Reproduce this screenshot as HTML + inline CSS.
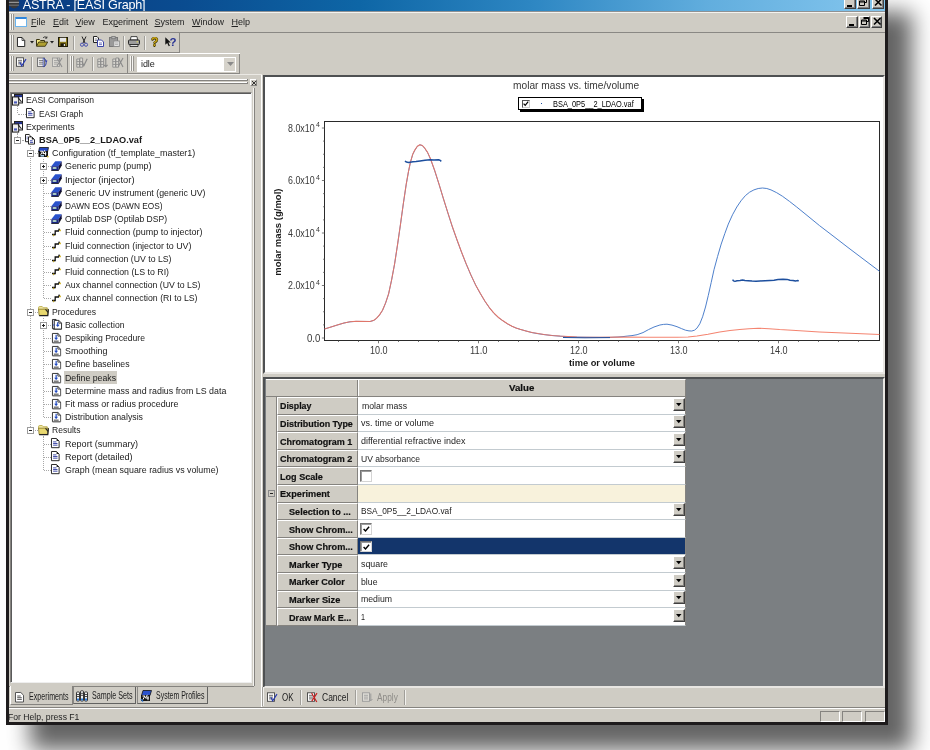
<!DOCTYPE html>
<html><head><meta charset="utf-8"><title>ASTRA</title>
<style>
html,body{margin:0;padding:0;background:#fff;}
body{width:930px;height:750px;overflow:hidden;position:relative;font-family:"Liberation Sans",sans-serif;font-size:9px;color:#000;}
div{position:absolute;box-sizing:border-box;}
svg{position:absolute;overflow:visible;}
.t{height:16px;line-height:16px;white-space:pre;}
u{text-decoration:underline;}
</style></head>
<body>
<div id="root" style="left:0;top:0;width:930px;height:750px;will-change:transform;">
<div style="left:6px;top:-13px;width:882px;height:737.8px;background:#cfccc4;border:3px solid #1e1b1c;box-shadow:24px 25px 21px rgba(0,0,2,0.61);"></div>
<div style="left:9px;top:0px;width:876px;height:11.2px;background:linear-gradient(90deg,#0a3a80 0%,#0a4c90 20%,#0e66a6 40%,#2e87c3 60%,#62aede 80%,#84c6ee 100%);"></div>
<div class="t" style="left:22.7px;top:-3px;font-size:12.6px;color:#fff;letter-spacing:-0.2px;">ASTRA - [EASI Graph]</div>
<svg style="left:8.3px;top:-3.6px" width="12" height="13.5" viewBox="0 0 13 14" preserveAspectRatio="none"><ellipse cx="6.5" cy="7" rx="5.5" ry="6" fill="#3a3a3c"/><rect x="1" y="6" width="11" height="1.2" fill="#9a9a9a"/><rect x="1" y="9" width="11" height="1" fill="#777"/></svg>
<div style="left:844.3px;top:-2.6px;width:12px;height:11.6px;background:#cfccc4;border:1px solid;border-color:#fff #404040 #404040 #fff;box-shadow:inset -1px -1px 0 #808080;"></div>
<div style="left:847.3px;top:5.0px;width:5px;height:2px;background:#000;"></div>
<div style="left:857.3px;top:-2.6px;width:12.3px;height:11.6px;background:#cfccc4;border:1px solid;border-color:#fff #404040 #404040 #fff;box-shadow:inset -1px -1px 0 #808080;"></div>
<svg style="left:859.3px;top:-1.6px" width="9" height="9" viewBox="0 0 9 9"><path d="M2.5 0.5h5v4h-1.5M2.5 1.5h5M0.5 3h5v4.5h-5zM0.5 4h5" stroke="#000" stroke-width="1" fill="none"/></svg>
<div style="left:872px;top:-2.6px;width:12.3px;height:11.6px;background:#cfccc4;border:1px solid;border-color:#fff #404040 #404040 #fff;box-shadow:inset -1px -1px 0 #808080;"></div>
<svg style="left:874px;top:-1.6px" width="9" height="9" viewBox="0 0 9 9"><path d="M1 1l6.5 6.5M7.5 1l-6.5 6.5" stroke="#000" stroke-width="1.6" fill="none"/></svg>
<div style="left:846.3px;top:16.2px;width:11.6px;height:12.2px;background:#cfccc4;border:1px solid;border-color:#fff #404040 #404040 #fff;box-shadow:inset -1px -1px 0 #808080;"></div>
<div style="left:849.3px;top:24.4px;width:5px;height:2px;background:#000;"></div>
<div style="left:858.5px;top:16.2px;width:11.6px;height:12.2px;background:#cfccc4;border:1px solid;border-color:#fff #404040 #404040 #fff;box-shadow:inset -1px -1px 0 #808080;"></div>
<svg style="left:860.5px;top:17.2px" width="9" height="9" viewBox="0 0 9 9"><path d="M2.5 0.5h5v4h-1.5M2.5 1.5h5M0.5 3h5v4.5h-5zM0.5 4h5" stroke="#000" stroke-width="1" fill="none"/></svg>
<div style="left:870.6px;top:16.2px;width:11.8px;height:12.2px;background:#cfccc4;border:1px solid;border-color:#fff #404040 #404040 #fff;box-shadow:inset -1px -1px 0 #808080;"></div>
<svg style="left:872.6px;top:17.2px" width="9" height="9" viewBox="0 0 9 9"><path d="M1 1l6.5 6.5M7.5 1l-6.5 6.5" stroke="#000" stroke-width="1.6" fill="none"/></svg>
<div style="left:9px;top:11.2px;width:876px;height:1.1px;background:#8e9194;"></div>
<div style="left:9px;top:12.3px;width:876px;height:1px;background:#f4f3f0;"></div>
<div style="left:9px;top:31.8px;width:876px;height:1px;background:#8a8884;"></div>
<div style="left:10.4px;top:14px;width:0.7px;height:16px;background:#f6f5f2;"></div>
<div style="left:11.1px;top:14px;width:0.6px;height:16px;background:#96948f;"></div>
<div style="left:12.1px;top:14px;width:0.7px;height:16px;background:#f6f5f2;"></div>
<div style="left:12.8px;top:14px;width:0.6px;height:16px;background:#96948f;"></div>
<div style="left:14.5px;top:17px;width:12px;height:10.4px;background:#fff;border:1px solid #6ab4ee;border-top:2px solid #2f86dc;border-radius:1px;"></div>
<div class="t" style="left:31px;top:14px;font-size:9px;color:#222;"><u>F</u>ile</div>
<div class="t" style="left:53px;top:14px;font-size:9px;color:#222;"><u>E</u>dit</div>
<div class="t" style="left:75.5px;top:14px;font-size:9px;color:#222;"><u>V</u>iew</div>
<div class="t" style="left:102.5px;top:14px;font-size:9px;color:#222;">Ex<u>p</u>eriment</div>
<div class="t" style="left:154.5px;top:14px;font-size:9px;color:#222;"><u>S</u>ystem</div>
<div class="t" style="left:192px;top:14px;font-size:9px;color:#222;"><u>W</u>indow</div>
<div class="t" style="left:231.5px;top:14px;font-size:9px;color:#222;"><u>H</u>elp</div>
<div style="left:9px;top:52px;width:171px;height:1px;background:#8a8884;"></div>
<div style="left:179px;top:33px;width:1px;height:19px;background:#8a8884;"></div>
<div style="left:10.4px;top:35px;width:0.7px;height:15px;background:#f6f5f2;"></div>
<div style="left:11.1px;top:35px;width:0.6px;height:15px;background:#96948f;"></div>
<div style="left:12.1px;top:35px;width:0.7px;height:15px;background:#f6f5f2;"></div>
<div style="left:12.8px;top:35px;width:0.6px;height:15px;background:#96948f;"></div>
<div style="left:9px;top:73px;width:231px;height:1px;background:#8a8884;"></div>
<div style="left:9px;top:53px;width:231px;height:1px;background:#fff;"></div>
<div style="left:67px;top:54px;width:1px;height:19px;background:#8a8884;"></div>
<div style="left:127px;top:54px;width:1px;height:19px;background:#8a8884;"></div>
<div style="left:239px;top:54px;width:1px;height:19px;background:#8a8884;"></div>
<div style="left:10.4px;top:56px;width:0.7px;height:15px;background:#f6f5f2;"></div>
<div style="left:11.1px;top:56px;width:0.6px;height:15px;background:#96948f;"></div>
<div style="left:12.1px;top:56px;width:0.7px;height:15px;background:#f6f5f2;"></div>
<div style="left:12.8px;top:56px;width:0.6px;height:15px;background:#96948f;"></div>
<div style="left:70.4px;top:56px;width:0.7px;height:15px;background:#f6f5f2;"></div>
<div style="left:71.1px;top:56px;width:0.6px;height:15px;background:#96948f;"></div>
<div style="left:72.1px;top:56px;width:0.7px;height:15px;background:#f6f5f2;"></div>
<div style="left:72.8px;top:56px;width:0.6px;height:15px;background:#96948f;"></div>
<div style="left:130.4px;top:56px;width:0.7px;height:15px;background:#f6f5f2;"></div>
<div style="left:131.1px;top:56px;width:0.6px;height:15px;background:#96948f;"></div>
<div style="left:132.1px;top:56px;width:0.7px;height:15px;background:#f6f5f2;"></div>
<div style="left:132.8px;top:56px;width:0.6px;height:15px;background:#96948f;"></div>
<div style="left:73px;top:36px;width:1px;height:14px;background:#a09e99;"></div>
<div style="left:74px;top:36px;width:1px;height:14px;background:#f2f1ee;"></div>
<div style="left:123px;top:36px;width:1px;height:14px;background:#a09e99;"></div>
<div style="left:124px;top:36px;width:1px;height:14px;background:#f2f1ee;"></div>
<div style="left:144px;top:36px;width:1px;height:14px;background:#a09e99;"></div>
<div style="left:145px;top:36px;width:1px;height:14px;background:#f2f1ee;"></div>
<div style="left:31px;top:57px;width:1px;height:14px;background:#a09e99;"></div>
<div style="left:32px;top:57px;width:1px;height:14px;background:#f2f1ee;"></div>
<div style="left:92px;top:57px;width:1px;height:14px;background:#a09e99;"></div>
<div style="left:93px;top:57px;width:1px;height:14px;background:#f2f1ee;"></div>

<svg style="left:17px;top:37px" width="8.2" height="10" viewBox="0 0 9 10" preserveAspectRatio="none"><path d="M0.5 0.5h5l3 3v6h-8z" fill="#fff" stroke="#222" stroke-width="1"/><path d="M5.5 0.5v3h3" fill="none" stroke="#222" stroke-width="0.8"/></svg>
<svg style="left:30px;top:41px" width="4" height="3" viewBox="0 0 4 3"><path d="M0 0h4l-2 2.5z" fill="#222"/></svg>
<svg style="left:36px;top:36px" width="12" height="11" viewBox="0 0 12 11"><path d="M0.5 10V3.5h3l1 1h4V6" fill="#f6ea80" stroke="#3a3412" stroke-width="1"/><path d="M0.5 10.3l2.2-4.3h9l-2.5 4.3z" fill="#b0a030" stroke="#3a3412" stroke-width="0.9"/><path d="M7 2c1.2-1.6 2.8-1.6 3.8 0M10.9 0.4v1.8h-1.8" fill="none" stroke="#222" stroke-width="0.8"/></svg>
<svg style="left:50px;top:41px" width="4" height="3" viewBox="0 0 4 3"><path d="M0 0h4l-2 2.5z" fill="#222"/></svg>
<svg style="left:58px;top:37px" width="10" height="10" viewBox="0 0 10 10"><rect x="0.5" y="0.5" width="9" height="9" fill="#8a7a1e" stroke="#1e1a08" stroke-width="1"/><rect x="2" y="0.8" width="6" height="4" fill="#e6e6e6"/><rect x="2.5" y="6.3" width="5" height="3.2" fill="#1e1a08"/><rect x="5.8" y="7" width="1.2" height="2" fill="#ddd"/></svg>
<svg style="left:80px;top:36px" width="8" height="11" viewBox="0 0 8 11"><path d="M2 0.5l3 6.5M6 0.5l-3 6.5" stroke="#222" stroke-width="1" fill="none"/><circle cx="2" cy="8.7" r="1.6" fill="none" stroke="#4a52b0" stroke-width="1"/><circle cx="6" cy="8.7" r="1.6" fill="none" stroke="#4a52b0" stroke-width="1"/></svg>
<svg style="left:93px;top:36px" width="11" height="11" viewBox="0 0 11 11"><path d="M0.5 0.5h3.5l1.5 1.5v4.5h-5z" fill="#fff" stroke="#222" stroke-width="1"/><path d="M1.8 3h2.4M1.8 4.6h2.4" stroke="#555" stroke-width="0.7"/><path d="M4.5 4h4l2 2v4.5h-6z" fill="#fff" stroke="#3a44a8" stroke-width="1"/><path d="M6 7h3M6 8.6h3" stroke="#3a44a8" stroke-width="0.7"/></svg>
<svg style="left:109px;top:36px" width="11" height="11" viewBox="0 0 11 11"><rect x="0.5" y="1.5" width="8" height="9" fill="#9a9a9a" stroke="#777" stroke-width="1"/><rect x="2.8" y="0.5" width="3.4" height="2.2" fill="#bbb" stroke="#777" stroke-width="0.8"/><rect x="4.8" y="5" width="5.5" height="5.5" fill="#e8e8e8" stroke="#888" stroke-width="0.9"/><path d="M6 7h3M6 8.6h3" stroke="#999" stroke-width="0.7"/></svg>
<svg style="left:128px;top:36px" width="12" height="11" viewBox="0 0 12 11"><path d="M3 0.6h6l0.6 3.4h-7.2z" fill="#fff" stroke="#333" stroke-width="0.9"/><rect x="0.5" y="4" width="11" height="4.5" rx="0.8" fill="#9c9c9c" stroke="#2a2a2a" stroke-width="1"/><path d="M2 8.5h8v2h-8z" fill="#ddd" stroke="#2a2a2a" stroke-width="0.9"/><rect x="8.6" y="5.3" width="1.4" height="1" fill="#e8e060"/></svg>
<div class="t" style="left:151px;top:34px;font-size:12px;font-weight:700;color:#c8a414;text-shadow:0.6px 0 0 #3a3000,-0.6px 0 0 #3a3000,0 0.6px 0 #3a3000;">?</div>
<svg style="left:165px;top:37px" width="6" height="10" viewBox="0 0 6 10"><path d="M0.3 0.3v7.4l1.9-1.8 1.5 3.4 1.2-0.6-1.5-3.2h2.4z" fill="#111"/></svg>
<div class="t" style="left:169.5px;top:33.5px;font-size:11.5px;font-weight:700;color:#2a3494;">?</div>


<svg style="left:16px;top:57px" width="11" height="11" viewBox="0 0 11 11"><rect x="0.5" y="0.8" width="7" height="8.5" fill="#fff" stroke="#444" stroke-width="0.9"/><path d="M2.0 3.3h4M2.0 5.1h4M2.0 6.8999999999999995h4" stroke="#444" stroke-width="0.8"/><path d="M3.8 5.2l1.9 3.6 4.3-6.6" fill="none" stroke="#2a3cb0" stroke-width="1.2"/></svg>
<svg style="left:37px;top:57px" width="11" height="11" viewBox="0 0 11 11"><rect x="0.5" y="1" width="7" height="8.5" fill="#ececec" stroke="#6a6a6a" stroke-width="0.9"/><path d="M2.0 3.5h4M2.0 5.3h4M2.0 7.1h4" stroke="#6a6a6a" stroke-width="0.8"/><path d="M6.6 1.3c3.4 0.4 3.4 8 0 8.4" fill="none" stroke="#2a3cb0" stroke-width="1"/><path d="M8.2 3.2l2.4 0.6-1.6 1.6z" fill="#2a3cb0"/><path d="M6.2 1.2v8.6" stroke="#2a3cb0" stroke-width="0.7"/></svg>
<svg style="left:52px;top:57px" width="11" height="11" viewBox="0 0 11 11"><rect x="0.5" y="1" width="7" height="8.5" fill="#dcdad4" stroke="#9a9a9a" stroke-width="0.9"/><path d="M2.0 3.5h4M2.0 5.3h4M2.0 7.1h4" stroke="#9a9a9a" stroke-width="0.8"/><path d="M5 1l5 9M10 1l-5 8" fill="none" stroke="#8e8e8e" stroke-width="1.1"/></svg>
<svg style="left:76px;top:57px" width="12" height="11" viewBox="0 0 12 11"><path d="M0.8 2h2.8v8.2h-2.8zM3.8 1h2.8v9.2h-2.8zM0.8 4.6h5.8M0.8 7.4h5.8" fill="#dcdad4" stroke="#8c8c8c" stroke-width="0.9"/><path d="M6 4.5l1.8 4.2 3.4-7" fill="none" stroke="#8a8a8a" stroke-width="1.2"/></svg>
<svg style="left:97px;top:57px" width="12" height="11" viewBox="0 0 12 11"><path d="M0.8 2h2.8v8.2h-2.8zM3.8 1h2.8v9.2h-2.8zM0.8 4.6h5.8M0.8 7.4h5.8" fill="#dcdad4" stroke="#8c8c8c" stroke-width="0.9"/><path d="M8.8 1v8.4M7 7.8l1.8 2 1.8-2" fill="none" stroke="#8a8a8a" stroke-width="1.1"/></svg>
<svg style="left:112px;top:57px" width="12" height="11" viewBox="0 0 12 11"><path d="M0.8 2h2.8v8.2h-2.8zM3.8 1h2.8v9.2h-2.8zM0.8 4.6h5.8M0.8 7.4h5.8" fill="#dcdad4" stroke="#8c8c8c" stroke-width="0.9"/><path d="M6.4 1l4.6 9M11 1l-4.8 8.4" fill="none" stroke="#8a8a8a" stroke-width="1.1"/></svg>

<div style="left:137px;top:57px;width:99px;height:15px;background:#fff;"></div>
<div style="left:224px;top:58px;width:11px;height:13px;background:#d6d3cb;"></div>
<svg style="left:226.5px;top:62px" width="7" height="4" viewBox="0 0 7 4"><path d="M0 0h7l-3.5 4z" fill="#8a8a8a"/></svg>
<div class="t" style="left:141px;top:56px;font-size:9px;color:#222;letter-spacing:-0.1px;">idle</div>
<div style="left:9px;top:74px;width:253px;height:1px;background:#ebe9e4;"></div>
<div style="left:261px;top:75px;width:1px;height:633px;background:#fff;"></div>
<div style="left:262px;top:75px;width:1px;height:633px;background:#cfccc4;"></div>
<div style="left:9px;top:79.3px;width:239px;height:2.2px;background:#cfccc4;border-top:1px solid #fff;border-bottom:1px solid #85837f;"></div>
<div style="left:247px;top:79.3px;width:1px;height:2.2px;background:#85837f;"></div>
<div style="left:9px;top:82.2px;width:239px;height:2.2px;background:#cfccc4;border-top:1px solid #fff;border-bottom:1px solid #85837f;"></div>
<div style="left:247px;top:82.2px;width:1px;height:2.2px;background:#85837f;"></div>
<div style="left:250px;top:79px;width:7px;height:7px;background:#cfccc4;border:1px solid;border-color:#fff #85837f #85837f #fff;"></div>
<svg style="left:251.5px;top:80.5px" width="4" height="4" viewBox="0 0 4 4"><path d="M0 0l4 4M4 0l-4 4" stroke="#222" stroke-width="0.9"/></svg>
<div style="left:254px;top:88px;width:1px;height:598px;background:#85837f;"></div>
<div style="left:253px;top:88px;width:1px;height:598px;background:#f4f3f0;"></div>
<div style="left:10.3px;top:91.7px;width:241.8px;height:591px;background:#fff;border:1px solid;border-color:#85837f #eee #eee #85837f;box-shadow:inset 1px 1px 0 #5a5a5a;"></div>
<div style="left:17px;top:106.3px;width:1px;height:7.200000000000003px;border-left:1px dotted #a8a8a8;"></div>
<div style="left:17px;top:132.7px;width:1px;height:4.199999999999989px;border-left:1px dotted #a8a8a8;"></div>
<div style="left:30px;top:145.89999999999998px;width:1px;height:281.40000000000003px;border-left:1px dotted #a8a8a8;"></div>
<div style="left:43px;top:159.1px;width:1px;height:139.20000000000002px;border-left:1px dotted #a8a8a8;"></div>
<div style="left:43px;top:317.5px;width:1px;height:99.59999999999997px;border-left:1px dotted #a8a8a8;"></div>
<div style="left:43px;top:436.3px;width:1px;height:33.599999999999966px;border-left:1px dotted #a8a8a8;"></div>
<svg style="left:12px;top:94.1px" width="11" height="11.6" viewBox="0 0 11 11" preserveAspectRatio="none"><rect x="2.5" y="0.5" width="8" height="8" fill="#fff" stroke="#222" stroke-width="1"/><rect x="3" y="1" width="7" height="2" fill="#1c2c8c"/><rect x="0.5" y="2.8" width="6.2" height="7.7" fill="#eee" stroke="#222" stroke-width="1"/><path d="M6 3.5l3.5 4" stroke="#222" stroke-width="1"/><rect x="2" y="7" width="3" height="2" fill="#4a5ab8"/></svg>
<div class="t" style="left:25.5px;top:92px;font-size:9px;transform:scaleX(0.9507);transform-origin:0 50%;color:#1a1a1a;">EASI Comparison</div>
<div style="left:17.5px;top:114px;width:8.0px;height:1px;border-top:1px dotted #a8a8a8;"></div>
<svg style="left:26px;top:107.9px" width="8.6" height="10.2" viewBox="0 0 9 10.5" preserveAspectRatio="none"><path d="M0.5 0.5h5.3l2.7 2.7v6.8h-8z" fill="#fff" stroke="#222" stroke-width="1"/><path d="M5.8 0.5v2.7h2.7z" fill="#222"/><path d="M2.2 4h3.5M2.2 5.7h4.6M2.2 7.4h4.6" stroke="#3c48a8" stroke-width="1"/></svg>
<div class="t" style="left:38.8px;top:106px;font-size:9px;transform:scaleX(0.9162);transform-origin:0 50%;color:#1a1a1a;">EASI Graph</div>
<svg style="left:12px;top:120.49999999999999px" width="11" height="11.6" viewBox="0 0 11 11" preserveAspectRatio="none"><rect x="2.5" y="0.5" width="8" height="8" fill="#fff" stroke="#222" stroke-width="1"/><rect x="3" y="1" width="7" height="2" fill="#1c2c8c"/><rect x="0.5" y="2.8" width="6.2" height="7.7" fill="#eee" stroke="#222" stroke-width="1"/><path d="M6 3.5l3.5 4" stroke="#222" stroke-width="1"/><rect x="2" y="7" width="3" height="2" fill="#4a5ab8"/></svg>
<div class="t" style="left:25.5px;top:119px;font-size:9px;transform:scaleX(0.9697);transform-origin:0 50%;color:#1a1a1a;">Experiments</div>
<div style="left:21.5px;top:140px;width:4.0px;height:1px;border-top:1px dotted #a8a8a8;"></div>
<div style="left:14.0px;top:137.0px;width:7px;height:7px;background:#fff;border:1px solid #9c9c9c;"></div>
<div style="left:16.0px;top:140.0px;width:3px;height:1px;background:#222;"></div>
<svg style="left:25.2px;top:133.59999999999997px" width="10" height="10.6" viewBox="0 0 10 11" preserveAspectRatio="none"><path d="M0.5 0.5h3.5l1.5 1.5v6h-5z" fill="#fff" stroke="#222" stroke-width="1"/><path d="M3.5 3h3.3l2.7 2.7v4.8h-6z" fill="#fff" stroke="#222" stroke-width="1"/><path d="M6.8 3v2.7h2.7z" fill="#222"/><path d="M5 7h2.6M5 8.7h3.2" stroke="#3c48a8" stroke-width="1"/><path d="M1.6 3.2h1.2M1.6 5h1.2" stroke="#3c48a8" stroke-width="0.9"/></svg>
<div class="t" style="left:38.8px;top:132px;font-size:9px;transform:scaleX(1.0194);transform-origin:0 50%;font-weight:700;color:#1a1a1a;">BSA_0P5__2_LDAO.vaf</div>
<div style="left:34.5px;top:153px;width:3.200000000000003px;height:1px;border-top:1px dotted #a8a8a8;"></div>
<div style="left:27.0px;top:150.0px;width:7px;height:7px;background:#fff;border:1px solid #9c9c9c;"></div>
<div style="left:29.0px;top:153.0px;width:3px;height:1px;background:#222;"></div>
<svg style="left:38.2px;top:147.2px" width="11" height="11" viewBox="0 0 11 11"><path d="M1.5 0.5h9l-1 4.5h-9z" fill="#2448c4" stroke="#111" stroke-width="0.8"/><path d="M0.5 4h9.5v6h-9.5z" fill="#111"/><path d="M2.2 4.2h2.6l-2.2 3.6M6.8 3.2l-2 3.4h3.4M7.6 4.6v4" stroke="#fff" stroke-width="1" fill="none"/><rect x="2.5" y="8" width="3.5" height="1.6" fill="#9ac8e8"/><circle cx="9.8" cy="9.6" r="0.9" fill="#c8b030"/></svg>
<div class="t" style="left:51.9px;top:145px;font-size:9px;transform:scaleX(0.9947);transform-origin:0 50%;color:#1a1a1a;">Configuration (tf_template_master1)</div>
<div style="left:47.5px;top:166px;width:3.299999999999997px;height:1px;border-top:1px dotted #a8a8a8;"></div>
<div style="left:40.0px;top:163.0px;width:7px;height:7px;background:#fff;border:1px solid #9c9c9c;"></div>
<div style="left:42.0px;top:166.0px;width:3px;height:1px;background:#222;"></div>
<div style="left:43.0px;top:165.0px;width:1px;height:3px;background:#222;"></div>
<svg style="left:51.3px;top:161.0px" width="11" height="10" viewBox="0 0 11 10"><path d="M0.3 5.2l4-4.9h6.4l-3.2 4.9z" fill="#2a52cc"/><path d="M10.7 0.3v3.6l-3.2 5.6v-4.3z" fill="#0c0c44"/><path d="M0.3 5.2h7.2v4.3h-7.2z" fill="#182484"/><path d="M0.3 9.5h7.2l3.2-5.6" fill="none" stroke="#000" stroke-width="0.7"/><rect x="1.6" y="6.3" width="4" height="1.5" fill="#9ad0b0"/><rect x="2.2" y="6.5" width="2.6" height="0.9" fill="#e8f4ec"/></svg>
<div class="t" style="left:64.7px;top:158px;font-size:9px;transform:scaleX(0.9883);transform-origin:0 50%;color:#1a1a1a;">Generic pump (pump)</div>
<div style="left:47.5px;top:180px;width:3.299999999999997px;height:1px;border-top:1px dotted #a8a8a8;"></div>
<div style="left:40.0px;top:177.0px;width:7px;height:7px;background:#fff;border:1px solid #9c9c9c;"></div>
<div style="left:42.0px;top:180.0px;width:3px;height:1px;background:#222;"></div>
<div style="left:43.0px;top:179.0px;width:1px;height:3px;background:#222;"></div>
<svg style="left:51.3px;top:174.2px" width="11" height="10" viewBox="0 0 11 10"><path d="M0.3 5.2l4-4.9h6.4l-3.2 4.9z" fill="#2a52cc"/><path d="M10.7 0.3v3.6l-3.2 5.6v-4.3z" fill="#0c0c44"/><path d="M0.3 5.2h7.2v4.3h-7.2z" fill="#182484"/><path d="M0.3 9.5h7.2l3.2-5.6" fill="none" stroke="#000" stroke-width="0.7"/><rect x="1.6" y="6.3" width="4" height="1.5" fill="#9ad0b0"/><rect x="2.2" y="6.5" width="2.6" height="0.9" fill="#e8f4ec"/></svg>
<div class="t" style="left:64.7px;top:172px;font-size:9px;transform:scaleX(1.0371);transform-origin:0 50%;color:#1a1a1a;">Injector (injector)</div>
<div style="left:43.5px;top:193px;width:7.299999999999997px;height:1px;border-top:1px dotted #a8a8a8;"></div>
<svg style="left:51.3px;top:187.39999999999998px" width="11" height="10" viewBox="0 0 11 10"><path d="M0.3 5.2l4-4.9h6.4l-3.2 4.9z" fill="#2a52cc"/><path d="M10.7 0.3v3.6l-3.2 5.6v-4.3z" fill="#0c0c44"/><path d="M0.3 5.2h7.2v4.3h-7.2z" fill="#182484"/><path d="M0.3 9.5h7.2l3.2-5.6" fill="none" stroke="#000" stroke-width="0.7"/><rect x="1.6" y="6.3" width="4" height="1.5" fill="#9ad0b0"/><rect x="2.2" y="6.5" width="2.6" height="0.9" fill="#e8f4ec"/></svg>
<div class="t" style="left:64.7px;top:185px;font-size:9px;transform:scaleX(0.9754);transform-origin:0 50%;color:#1a1a1a;">Generic UV instrument (generic UV)</div>
<div style="left:43.5px;top:206px;width:7.299999999999997px;height:1px;border-top:1px dotted #a8a8a8;"></div>
<svg style="left:51.3px;top:200.59999999999997px" width="11" height="10" viewBox="0 0 11 10"><path d="M0.3 5.2l4-4.9h6.4l-3.2 4.9z" fill="#2a52cc"/><path d="M10.7 0.3v3.6l-3.2 5.6v-4.3z" fill="#0c0c44"/><path d="M0.3 5.2h7.2v4.3h-7.2z" fill="#182484"/><path d="M0.3 9.5h7.2l3.2-5.6" fill="none" stroke="#000" stroke-width="0.7"/><rect x="1.6" y="6.3" width="4" height="1.5" fill="#9ad0b0"/><rect x="2.2" y="6.5" width="2.6" height="0.9" fill="#e8f4ec"/></svg>
<div class="t" style="left:64.7px;top:198px;font-size:9px;transform:scaleX(0.9212);transform-origin:0 50%;color:#1a1a1a;">DAWN EOS (DAWN EOS)</div>
<div style="left:43.5px;top:219px;width:7.299999999999997px;height:1px;border-top:1px dotted #a8a8a8;"></div>
<svg style="left:51.3px;top:213.79999999999998px" width="11" height="10" viewBox="0 0 11 10"><path d="M0.3 5.2l4-4.9h6.4l-3.2 4.9z" fill="#2a52cc"/><path d="M10.7 0.3v3.6l-3.2 5.6v-4.3z" fill="#0c0c44"/><path d="M0.3 5.2h7.2v4.3h-7.2z" fill="#182484"/><path d="M0.3 9.5h7.2l3.2-5.6" fill="none" stroke="#000" stroke-width="0.7"/><rect x="1.6" y="6.3" width="4" height="1.5" fill="#9ad0b0"/><rect x="2.2" y="6.5" width="2.6" height="0.9" fill="#e8f4ec"/></svg>
<div class="t" style="left:64.7px;top:211px;font-size:9px;transform:scaleX(0.9500);transform-origin:0 50%;color:#1a1a1a;">Optilab DSP (Optilab DSP)</div>
<div style="left:43.5px;top:232px;width:7.299999999999997px;height:1px;border-top:1px dotted #a8a8a8;"></div>
<svg style="left:51.3px;top:226.8px" width="11" height="11" viewBox="0 0 11 11"><path d="M1 7.5h3.2v-3.5h3.8" fill="none" stroke="#111" stroke-width="1.3"/><path d="M1.8 7.2l1 2.4 1-2.4z" fill="#111"/><path d="M8 1l1.6 2.6-2.8 0.2z" fill="#111"/><circle cx="9" cy="3.4" r="0.9" fill="#d8b81c"/><circle cx="2.6" cy="8.2" r="0.7" fill="#d8b81c"/></svg>
<div class="t" style="left:64.7px;top:224px;font-size:9px;transform:scaleX(0.9960);transform-origin:0 50%;color:#1a1a1a;">Fluid connection (pump to injector)</div>
<div style="left:43.5px;top:246px;width:7.299999999999997px;height:1px;border-top:1px dotted #a8a8a8;"></div>
<svg style="left:51.3px;top:240.0px" width="11" height="11" viewBox="0 0 11 11"><path d="M1 7.5h3.2v-3.5h3.8" fill="none" stroke="#111" stroke-width="1.3"/><path d="M1.8 7.2l1 2.4 1-2.4z" fill="#111"/><path d="M8 1l1.6 2.6-2.8 0.2z" fill="#111"/><circle cx="9" cy="3.4" r="0.9" fill="#d8b81c"/><circle cx="2.6" cy="8.2" r="0.7" fill="#d8b81c"/></svg>
<div class="t" style="left:64.7px;top:238px;font-size:9px;transform:scaleX(0.9879);transform-origin:0 50%;color:#1a1a1a;">Fluid connection (injector to UV)</div>
<div style="left:43.5px;top:259px;width:7.299999999999997px;height:1px;border-top:1px dotted #a8a8a8;"></div>
<svg style="left:51.3px;top:253.2px" width="11" height="11" viewBox="0 0 11 11"><path d="M1 7.5h3.2v-3.5h3.8" fill="none" stroke="#111" stroke-width="1.3"/><path d="M1.8 7.2l1 2.4 1-2.4z" fill="#111"/><path d="M8 1l1.6 2.6-2.8 0.2z" fill="#111"/><circle cx="9" cy="3.4" r="0.9" fill="#d8b81c"/><circle cx="2.6" cy="8.2" r="0.7" fill="#d8b81c"/></svg>
<div class="t" style="left:64.7px;top:251px;font-size:9px;transform:scaleX(0.9678);transform-origin:0 50%;color:#1a1a1a;">Fluid connection (UV to LS)</div>
<div style="left:43.5px;top:272px;width:7.299999999999997px;height:1px;border-top:1px dotted #a8a8a8;"></div>
<svg style="left:51.3px;top:266.4px" width="11" height="11" viewBox="0 0 11 11"><path d="M1 7.5h3.2v-3.5h3.8" fill="none" stroke="#111" stroke-width="1.3"/><path d="M1.8 7.2l1 2.4 1-2.4z" fill="#111"/><path d="M8 1l1.6 2.6-2.8 0.2z" fill="#111"/><circle cx="9" cy="3.4" r="0.9" fill="#d8b81c"/><circle cx="2.6" cy="8.2" r="0.7" fill="#d8b81c"/></svg>
<div class="t" style="left:64.7px;top:264px;font-size:9px;transform:scaleX(0.9761);transform-origin:0 50%;color:#1a1a1a;">Fluid connection (LS to RI)</div>
<div style="left:43.5px;top:285px;width:7.299999999999997px;height:1px;border-top:1px dotted #a8a8a8;"></div>
<svg style="left:51.3px;top:279.59999999999997px" width="11" height="11" viewBox="0 0 11 11"><path d="M1 7.5h3.2v-3.5h3.8" fill="none" stroke="#111" stroke-width="1.3"/><path d="M1.8 7.2l1 2.4 1-2.4z" fill="#111"/><path d="M8 1l1.6 2.6-2.8 0.2z" fill="#111"/><circle cx="9" cy="3.4" r="0.9" fill="#d8b81c"/><circle cx="2.6" cy="8.2" r="0.7" fill="#d8b81c"/></svg>
<div class="t" style="left:64.7px;top:277px;font-size:9px;transform:scaleX(0.9674);transform-origin:0 50%;color:#1a1a1a;">Aux channel connection (UV to LS)</div>
<div style="left:43.5px;top:298px;width:7.299999999999997px;height:1px;border-top:1px dotted #a8a8a8;"></div>
<svg style="left:51.3px;top:292.8px" width="11" height="11" viewBox="0 0 11 11"><path d="M1 7.5h3.2v-3.5h3.8" fill="none" stroke="#111" stroke-width="1.3"/><path d="M1.8 7.2l1 2.4 1-2.4z" fill="#111"/><path d="M8 1l1.6 2.6-2.8 0.2z" fill="#111"/><circle cx="9" cy="3.4" r="0.9" fill="#d8b81c"/><circle cx="2.6" cy="8.2" r="0.7" fill="#d8b81c"/></svg>
<div class="t" style="left:64.7px;top:290px;font-size:9px;transform:scaleX(0.9702);transform-origin:0 50%;color:#1a1a1a;">Aux channel connection (RI to LS)</div>
<div style="left:34.5px;top:312px;width:3.200000000000003px;height:1px;border-top:1px dotted #a8a8a8;"></div>
<div style="left:27.0px;top:309.0px;width:7px;height:7px;background:#fff;border:1px solid #9c9c9c;"></div>
<div style="left:29.0px;top:312.0px;width:3px;height:1px;background:#222;"></div>
<svg style="left:38.2px;top:306.0px" width="11" height="10" viewBox="0 0 11 10"><path d="M0.5 1.8q0-1.3 1.3-1.3h2.4l1 1.2h4v2h-8.7z" fill="#f0e6a0" stroke="#b8a848" stroke-width="0.8"/><path d="M0.5 3.2h9.8l-0.6 6.2h-8.6z" fill="#e8d870" stroke="#8a7a28" stroke-width="0.8"/><path d="M10.4 3.2l-0.6 6.4h-8.6" fill="none" stroke="#222" stroke-width="1.2"/><path d="M7.5 3.4l2.6 3" stroke="#222" stroke-width="1.1"/></svg>
<div class="t" style="left:51.9px;top:304px;font-size:9px;transform:scaleX(0.9561);transform-origin:0 50%;color:#1a1a1a;">Procedures</div>
<div style="left:47.5px;top:325px;width:3.299999999999997px;height:1px;border-top:1px dotted #a8a8a8;"></div>
<div style="left:40.0px;top:322.0px;width:7px;height:7px;background:#fff;border:1px solid #9c9c9c;"></div>
<div style="left:42.0px;top:325.0px;width:3px;height:1px;background:#222;"></div>
<div style="left:43.0px;top:324.0px;width:1px;height:3px;background:#222;"></div>
<svg style="left:51.699999999999996px;top:319.3px" width="10" height="10.6" viewBox="0 0 11 11.5" preserveAspectRatio="none"><path d="M0.5 0.5h4v10h-4z" fill="#dde" stroke="#222" stroke-width="1"/><path d="M2.5 1.5h5l3 3v6.5h-8z" fill="#fff" stroke="#222" stroke-width="1"/><path d="M7.5 1.5v3h3" fill="none" stroke="#222" stroke-width="0.9"/><path d="M6.3 3.4v4.2" stroke="#2048c0" stroke-width="1.3"/><path d="M4.2 6.2h4.2l-2.1 2.5z" fill="#2048c0"/><path d="M1.3 6.5h1.6" stroke="#2048c0" stroke-width="1.1"/><path d="M1 11.2h9.4" stroke="#444" stroke-width="0.8"/></svg>
<div class="t" style="left:64.7px;top:317px;font-size:9px;transform:scaleX(0.9593);transform-origin:0 50%;color:#1a1a1a;">Basic collection</div>
<div style="left:43.5px;top:338px;width:7.299999999999997px;height:1px;border-top:1px dotted #a8a8a8;"></div>
<svg style="left:51.9px;top:332.9px" width="9" height="10.2" viewBox="0 0 10 11.5" preserveAspectRatio="none"><path d="M0.5 0.5h6l3 3v7.5h-9z" fill="#fff" stroke="#222" stroke-width="1"/><path d="M6.5 0.5v3h3" fill="none" stroke="#222" stroke-width="0.9"/><path d="M4.6 2v5" stroke="#2048c0" stroke-width="1.3"/><path d="M2.4 5.4h4.4l-2.2 2.6z" fill="#2048c0"/><path d="M2 9.2h5.4" stroke="#222" stroke-width="1"/><path d="M0.8 11.2h8.6M9.6 4v7.2" stroke="#888" stroke-width="0.8"/></svg>
<div class="t" style="left:64.7px;top:330px;font-size:9px;transform:scaleX(0.9576);transform-origin:0 50%;color:#1a1a1a;">Despiking Procedure</div>
<div style="left:43.5px;top:351px;width:7.299999999999997px;height:1px;border-top:1px dotted #a8a8a8;"></div>
<svg style="left:51.9px;top:346.09999999999997px" width="9" height="10.2" viewBox="0 0 10 11.5" preserveAspectRatio="none"><path d="M0.5 0.5h6l3 3v7.5h-9z" fill="#fff" stroke="#222" stroke-width="1"/><path d="M6.5 0.5v3h3" fill="none" stroke="#222" stroke-width="0.9"/><path d="M4.6 2v5" stroke="#2048c0" stroke-width="1.3"/><path d="M2.4 5.4h4.4l-2.2 2.6z" fill="#2048c0"/><path d="M2 9.2h5.4" stroke="#222" stroke-width="1"/><path d="M0.8 11.2h8.6M9.6 4v7.2" stroke="#888" stroke-width="0.8"/></svg>
<div class="t" style="left:64.7px;top:343px;font-size:9px;transform:scaleX(0.9878);transform-origin:0 50%;color:#1a1a1a;">Smoothing</div>
<div style="left:43.5px;top:364px;width:7.299999999999997px;height:1px;border-top:1px dotted #a8a8a8;"></div>
<svg style="left:51.9px;top:359.3px" width="9" height="10.2" viewBox="0 0 10 11.5" preserveAspectRatio="none"><path d="M0.5 0.5h6l3 3v7.5h-9z" fill="#fff" stroke="#222" stroke-width="1"/><path d="M6.5 0.5v3h3" fill="none" stroke="#222" stroke-width="0.9"/><path d="M4.6 2v5" stroke="#2048c0" stroke-width="1.3"/><path d="M2.4 5.4h4.4l-2.2 2.6z" fill="#2048c0"/><path d="M2 9.2h5.4" stroke="#222" stroke-width="1"/><path d="M0.8 11.2h8.6M9.6 4v7.2" stroke="#888" stroke-width="0.8"/></svg>
<div class="t" style="left:64.7px;top:356px;font-size:9px;transform:scaleX(0.9694);transform-origin:0 50%;color:#1a1a1a;">Define baselines</div>
<div style="left:43.5px;top:378px;width:7.299999999999997px;height:1px;border-top:1px dotted #a8a8a8;"></div>
<div style="left:63.900000000000006px;top:371.2px;width:53.2px;height:13px;background:#cfccc4;"></div>
<svg style="left:51.9px;top:372.5px" width="9" height="10.2" viewBox="0 0 10 11.5" preserveAspectRatio="none"><path d="M0.5 0.5h6l3 3v7.5h-9z" fill="#fff" stroke="#222" stroke-width="1"/><path d="M6.5 0.5v3h3" fill="none" stroke="#222" stroke-width="0.9"/><path d="M4.6 2v5" stroke="#2048c0" stroke-width="1.3"/><path d="M2.4 5.4h4.4l-2.2 2.6z" fill="#2048c0"/><path d="M2 9.2h5.4" stroke="#222" stroke-width="1"/><path d="M0.8 11.2h8.6M9.6 4v7.2" stroke="#888" stroke-width="0.8"/></svg>
<div class="t" style="left:64.7px;top:370px;font-size:9px;transform:scaleX(0.9709);transform-origin:0 50%;color:#1a1a1a;">Define peaks</div>
<div style="left:43.5px;top:391px;width:7.299999999999997px;height:1px;border-top:1px dotted #a8a8a8;"></div>
<svg style="left:51.9px;top:385.7px" width="9" height="10.2" viewBox="0 0 10 11.5" preserveAspectRatio="none"><path d="M0.5 0.5h6l3 3v7.5h-9z" fill="#fff" stroke="#222" stroke-width="1"/><path d="M6.5 0.5v3h3" fill="none" stroke="#222" stroke-width="0.9"/><path d="M4.6 2v5" stroke="#2048c0" stroke-width="1.3"/><path d="M2.4 5.4h4.4l-2.2 2.6z" fill="#2048c0"/><path d="M2 9.2h5.4" stroke="#222" stroke-width="1"/><path d="M0.8 11.2h8.6M9.6 4v7.2" stroke="#888" stroke-width="0.8"/></svg>
<div class="t" style="left:64.7px;top:383px;font-size:9px;transform:scaleX(0.9832);transform-origin:0 50%;color:#1a1a1a;">Determine mass and radius from LS data</div>
<div style="left:43.5px;top:404px;width:7.299999999999997px;height:1px;border-top:1px dotted #a8a8a8;"></div>
<svg style="left:51.9px;top:398.9px" width="9" height="10.2" viewBox="0 0 10 11.5" preserveAspectRatio="none"><path d="M0.5 0.5h6l3 3v7.5h-9z" fill="#fff" stroke="#222" stroke-width="1"/><path d="M6.5 0.5v3h3" fill="none" stroke="#222" stroke-width="0.9"/><path d="M4.6 2v5" stroke="#2048c0" stroke-width="1.3"/><path d="M2.4 5.4h4.4l-2.2 2.6z" fill="#2048c0"/><path d="M2 9.2h5.4" stroke="#222" stroke-width="1"/><path d="M0.8 11.2h8.6M9.6 4v7.2" stroke="#888" stroke-width="0.8"/></svg>
<div class="t" style="left:64.7px;top:396px;font-size:9px;transform:scaleX(0.9910);transform-origin:0 50%;color:#1a1a1a;">Fit mass or radius procedure</div>
<div style="left:43.5px;top:417px;width:7.299999999999997px;height:1px;border-top:1px dotted #a8a8a8;"></div>
<svg style="left:51.9px;top:412.09999999999997px" width="9" height="10.2" viewBox="0 0 10 11.5" preserveAspectRatio="none"><path d="M0.5 0.5h6l3 3v7.5h-9z" fill="#fff" stroke="#222" stroke-width="1"/><path d="M6.5 0.5v3h3" fill="none" stroke="#222" stroke-width="0.9"/><path d="M4.6 2v5" stroke="#2048c0" stroke-width="1.3"/><path d="M2.4 5.4h4.4l-2.2 2.6z" fill="#2048c0"/><path d="M2 9.2h5.4" stroke="#222" stroke-width="1"/><path d="M0.8 11.2h8.6M9.6 4v7.2" stroke="#888" stroke-width="0.8"/></svg>
<div class="t" style="left:64.7px;top:409px;font-size:9px;transform:scaleX(0.9746);transform-origin:0 50%;color:#1a1a1a;">Distribution analysis</div>
<div style="left:34.5px;top:430px;width:3.200000000000003px;height:1px;border-top:1px dotted #a8a8a8;"></div>
<div style="left:27.0px;top:427.0px;width:7px;height:7px;background:#fff;border:1px solid #9c9c9c;"></div>
<div style="left:29.0px;top:430.0px;width:3px;height:1px;background:#222;"></div>
<svg style="left:38.2px;top:424.8px" width="11" height="10" viewBox="0 0 11 10"><path d="M0.5 1.8q0-1.3 1.3-1.3h2.4l1 1.2h4v2h-8.7z" fill="#f0e6a0" stroke="#b8a848" stroke-width="0.8"/><path d="M0.5 3.2h9.8l-0.6 6.2h-8.6z" fill="#e8d870" stroke="#8a7a28" stroke-width="0.8"/><path d="M10.4 3.2l-0.6 6.4h-8.6" fill="none" stroke="#222" stroke-width="1.2"/><path d="M7.5 3.4l2.6 3" stroke="#222" stroke-width="1.1"/></svg>
<div class="t" style="left:51.9px;top:422px;font-size:9px;transform:scaleX(0.9497);transform-origin:0 50%;color:#1a1a1a;">Results</div>
<div style="left:43.5px;top:444px;width:7.299999999999997px;height:1px;border-top:1px dotted #a8a8a8;"></div>
<svg style="left:51.3px;top:437.9px" width="8.6" height="10.2" viewBox="0 0 9 10.5" preserveAspectRatio="none"><path d="M0.5 0.5h5.3l2.7 2.7v6.8h-8z" fill="#fff" stroke="#222" stroke-width="1"/><path d="M5.8 0.5v2.7h2.7z" fill="#222"/><path d="M2.2 4h3.5M2.2 5.7h4.6M2.2 7.4h4.6" stroke="#3c48a8" stroke-width="1"/></svg>
<div class="t" style="left:64.7px;top:436px;font-size:9px;transform:scaleX(1.0068);transform-origin:0 50%;color:#1a1a1a;">Report (summary)</div>
<div style="left:43.5px;top:457px;width:7.299999999999997px;height:1px;border-top:1px dotted #a8a8a8;"></div>
<svg style="left:51.3px;top:451.09999999999997px" width="8.6" height="10.2" viewBox="0 0 9 10.5" preserveAspectRatio="none"><path d="M0.5 0.5h5.3l2.7 2.7v6.8h-8z" fill="#fff" stroke="#222" stroke-width="1"/><path d="M5.8 0.5v2.7h2.7z" fill="#222"/><path d="M2.2 4h3.5M2.2 5.7h4.6M2.2 7.4h4.6" stroke="#3c48a8" stroke-width="1"/></svg>
<div class="t" style="left:64.7px;top:449px;font-size:9px;transform:scaleX(1.0070);transform-origin:0 50%;color:#1a1a1a;">Report (detailed)</div>
<div style="left:43.5px;top:470px;width:7.299999999999997px;height:1px;border-top:1px dotted #a8a8a8;"></div>
<svg style="left:51.3px;top:464.29999999999995px" width="8.6" height="10.2" viewBox="0 0 9 10.5" preserveAspectRatio="none"><path d="M0.5 0.5h5.3l2.7 2.7v6.8h-8z" fill="#fff" stroke="#222" stroke-width="1"/><path d="M5.8 0.5v2.7h2.7z" fill="#222"/><path d="M2.2 4h3.5M2.2 5.7h4.6M2.2 7.4h4.6" stroke="#3c48a8" stroke-width="1"/></svg>
<div class="t" style="left:64.7px;top:462px;font-size:9px;transform:scaleX(0.9836);transform-origin:0 50%;color:#1a1a1a;">Graph (mean square radius vs volume)</div>
<div style="left:9px;top:686px;width:245px;height:1px;background:#85837f;"></div>
<div style="left:10px;top:686px;width:63px;height:19px;background:#cfccc4;border:1px solid #85837f;border-top:none;border-left:1px solid #fff;"></div>
<div style="left:73px;top:686.5px;width:63px;height:17.2px;background:#cfccc4;border:1.6px solid #626260;border-top:none;border-left:1px solid #8a8884;"></div>
<div style="left:137px;top:686.5px;width:71px;height:17.2px;background:#cfccc4;border:1.6px solid #626260;border-top:none;border-left:1px solid #8a8884;"></div>
<svg style="left:15px;top:691.5px" width="9" height="10.5" viewBox="0 0 9 10.5"><path d="M0.5 0.5h5.3l2.7 2.7v6.8h-8z" fill="#fff" stroke="#555" stroke-width="1"/><path d="M2.2 4h3.5M2.2 5.7h4.6M2.2 7.4h4.6" stroke="#444" stroke-width="0.9"/></svg>
<svg style="left:76px;top:690px" width="12" height="12" viewBox="0 0 12 12"><rect x="0.5" y="2.0" width="3" height="9.0" rx="0.8" fill="#f4f4f4" stroke="#222" stroke-width="0.9"/><rect x="1" y="8.5" width="2" height="2" fill="#2a78d8"/><path d="M0.8 4.5h2.4M0.8 6.5h2.4" stroke="#222" stroke-width="0.8"/><rect x="4.5" y="0.8" width="3" height="10.2" rx="0.8" fill="#f4f4f4" stroke="#222" stroke-width="0.9"/><rect x="5" y="8.5" width="2" height="2" fill="#2a78d8"/><path d="M4.8 3.3h2.4M4.8 5.3h2.4" stroke="#222" stroke-width="0.8"/><rect x="8.5" y="2.0" width="3" height="9.0" rx="0.8" fill="#f4f4f4" stroke="#222" stroke-width="0.9"/><rect x="9" y="8.5" width="2" height="2" fill="#2a78d8"/><path d="M8.8 4.5h2.4M8.8 6.5h2.4" stroke="#222" stroke-width="0.8"/></svg>
<svg style="left:140px;top:690px" width="12" height="12" viewBox="0 0 12 12"><path d="M3 0.5h8.5l-1.5 5h-8.5z" fill="#2a52cc" stroke="#111" stroke-width="0.8"/><path d="M1 5h9v6h-9z" fill="#161616"/><path d="M2.5 6l2.4 0-2 3.6M7.4 4.8l-2 3.2h3.4M8 6.2v4" stroke="#fff" stroke-width="1" fill="none"/><path d="M1 9l2 2.6" stroke="#2a78d8" stroke-width="1.2"/></svg>
<div class="t" style="left:29px;top:689px;font-size:10px;transform:scaleX(0.7108);transform-origin:0 50%;color:#222;">Experiments</div>
<div class="t" style="left:91.5px;top:688px;font-size:10px;transform:scaleX(0.7144);transform-origin:0 50%;color:#222;">Sample Sets</div>
<div class="t" style="left:155.8px;top:688px;font-size:10px;transform:scaleX(0.6982);transform-origin:0 50%;color:#222;">System Profiles</div>
<div style="left:9px;top:707px;width:876px;height:1px;background:#85837f;"></div>
<div style="left:9px;top:708px;width:876px;height:1px;background:#fff;"></div>
<div class="t" style="left:8.3px;top:709px;font-size:9px;transform:scaleX(0.9582);transform-origin:0 50%;color:#222;">For Help, press F1</div>
<div style="left:820px;top:711px;width:20px;height:11px;border:1px solid;border-color:#85837f #fff #fff #85837f;"></div>
<div style="left:842px;top:711px;width:20px;height:11px;border:1px solid;border-color:#85837f #fff #fff #85837f;"></div>
<div style="left:865px;top:711px;width:20px;height:11px;border:1px solid;border-color:#85837f #fff #fff #85837f;"></div>
<div style="left:263px;top:74.5px;width:622px;height:299.3px;background:#fff;border:2px solid;border-color:#4e5052 #e8e6e2 #e8e6e2 #4e5052;border-top-width:2.5px;border-left-width:2.6px;"></div>
<svg style="left:0;top:0" width="930" height="750" viewBox="0 0 930 750"><rect x="324.5" y="121.5" width="555.0" height="219.0" fill="none" stroke="#2a2a2a" stroke-width="1"/><path d="M321.9 338.00H324.5 M323.1 324.88H324.5 M323.1 311.75H324.5 M323.1 298.62H324.5 M321.9 285.50H324.5 M323.1 272.38H324.5 M323.1 259.25H324.5 M323.1 246.12H324.5 M321.9 233.00H324.5 M323.1 219.88H324.5 M323.1 206.75H324.5 M323.1 193.62H324.5 M321.9 180.50H324.5 M323.1 167.38H324.5 M323.1 154.25H324.5 M323.1 141.12H324.5 M321.9 128.00H324.5 M338.5 340.5V342.0 M358.5 340.5V342.0 M378.5 340.5V343.3 M398.5 340.5V342.0 M418.5 340.5V342.0 M438.5 340.5V342.0 M458.5 340.5V342.0 M478.5 340.5V343.3 M498.5 340.5V342.0 M518.5 340.5V342.0 M538.5 340.5V342.0 M558.5 340.5V342.0 M578.5 340.5V343.3 M598.5 340.5V342.0 M618.5 340.5V342.0 M638.5 340.5V342.0 M658.5 340.5V342.0 M678.5 340.5V343.3 M698.5 340.5V342.0 M718.5 340.5V342.0 M738.5 340.5V342.0 M758.5 340.5V342.0 M778.5 340.5V343.3 M798.5 340.5V342.0 M818.5 340.5V342.0 M838.5 340.5V342.0 M858.5 340.5V342.0" stroke="#555" stroke-width="0.8" fill="none"/><polyline points="324.5,329.0 331.0,327.0 338.0,324.8 344.0,323.0 350.0,321.8 356.0,321.4 370.1,321.5 373.8,320.4 376.4,318.5 379.5,315.0 382.5,310.4 385.6,303.0 388.6,293.9 391.6,280.0 394.6,263.9 397.5,245.0 400.4,225.0 403.3,204.0 406.2,184.5 408.5,171.5 410.5,162.0 412.7,154.5 414.8,150.2 417.3,146.4 419.9,144.8 422.4,145.6 424.8,148.4 427.6,152.6 430.5,159.0 434.8,171.0 439.1,184.5 443.5,199.0 447.9,213.0 452.4,227.0 457.0,240.0 461.6,252.4 466.2,264.0 470.9,275.0 475.6,285.0 480.4,293.7 485.0,301.4 489.5,307.9 494.0,313.4 498.5,317.6 503.0,320.9 507.5,323.9 512.0,326.3 516.0,328.0 520.0,329.3 526.0,331.0 532.0,332.6 538.0,333.7 544.0,334.6 552.0,335.5 560.0,336.2 568.0,336.7 577.0,337.1 590.0,337.3 600.0,337.4 610.0,337.4 618.0,337.0 623.0,336.6 627.1,336.1 632.0,335.6 637.1,334.7 643.0,332.6 648.5,329.6 654.0,327.0 659.9,325.0 663.5,324.4 667.0,324.2 672.0,325.1 677.0,326.7 681.5,328.6 685.5,330.2 689.0,330.9 691.8,331.0 694.5,330.2 696.9,328.2 699.8,323.8 702.6,316.8 705.5,307.0 708.3,295.4 711.2,282.5 714.0,269.7 717.6,256.4 721.2,244.1 724.8,233.6 728.3,224.1 732.5,214.8 736.8,207.0 741.0,200.8 745.4,195.6 749.6,192.2 753.9,189.9 758.2,188.5 762.5,188.0 766.8,188.5 771.0,189.9 776.7,192.7 782.4,196.2 789.5,201.4 796.7,207.0 808.0,216.2 819.5,225.6 834.0,236.7 848.0,247.5 864.0,259.6 879.5,271.3" fill="none" stroke="#4479c8" stroke-width="0.95" stroke-linejoin="round"/><polyline points="324.5,328.9 331.0,326.9 338.0,324.7 344.0,322.9 350.0,321.7 356.0,321.2 370.1,321.4 373.8,320.2 376.4,318.4 379.5,314.9 382.5,310.2 385.6,302.9 388.6,293.8 391.6,279.9 394.6,263.8 397.5,244.8 400.4,224.8 403.3,203.8 406.2,184.3 408.5,171.3 410.5,161.8 412.7,154.3 414.8,150.1 417.3,146.2 419.9,144.7 422.4,145.5 424.8,148.2 427.6,152.4 430.5,158.8 434.8,170.8 439.1,184.3 443.5,198.8 447.9,212.8 452.4,226.8 457.0,239.8 461.6,252.2 466.2,263.9 470.9,274.9 475.6,284.9 480.4,293.6 485.0,301.2 489.5,307.8 494.0,313.2 498.5,317.5 503.0,320.8 507.5,323.8 512.0,326.2 516.0,327.9 520.0,329.2 526.0,330.9 532.0,332.5 538.0,333.6 544.0,334.5 552.0,335.4 560.0,336.1 568.0,336.6 577.0,337.0 590.0,337.2 600.0,337.2 620.0,336.9 650.0,337.3 677.0,337.3 688.0,337.0 697.0,336.1 708.0,334.2 719.7,331.9 730.0,330.5 739.7,329.6 749.0,328.7 758.2,328.2 769.0,328.7 779.6,329.6 800.0,330.8 819.5,331.9 850.0,333.3 879.5,334.4" fill="none" stroke="#f2735c" stroke-width="1.05" stroke-opacity="0.88" stroke-linejoin="round"/><polyline points="563.0,337.5 585.0,337.8 610.0,337.6" fill="none" stroke="#1d4f9e" stroke-width="1" /><polyline points="404.9,161.2 406.5,162.0 408.5,162.4 410.0,162.2 413.0,161.8 416.0,161.6 420.0,160.9 425.0,160.2 430.0,159.8 434.0,159.9 438.4,159.7 440.0,160.2 441.3,161.4" fill="none" stroke="#1d4f9e" stroke-width="1.5" stroke-linejoin="round"/><polyline points="732.6,279.6 733.5,280.9 735.0,281.4 737.0,280.8 740.0,280.4 742.5,280.0 745.0,280.5 748.0,280.7 752.0,281.1 756.0,281.2 760.0,280.9 765.0,280.7 770.0,280.4 774.0,280.2 778.0,279.6 783.0,279.3 787.0,279.4 790.0,280.2 793.0,280.4 795.5,281.0 797.0,280.6 798.8,280.8" fill="none" stroke="#1d4f9e" stroke-width="1.5" stroke-linejoin="round"/></svg>
<div class="t" style="left:512.8px;top:77px;font-size:10.6px;transform:scaleX(0.9608);transform-origin:0 50%;color:#383838;">molar mass vs. time/volume</div>
<div style="left:520px;top:99.3px;width:124px;height:13px;background:#000;"></div>
<div style="left:518px;top:97.3px;width:124px;height:13px;background:#fff;border:1px solid #000;"></div>
<div style="left:522px;top:100px;width:8px;height:7.5px;background:#fff;border:1px solid;border-color:#555 #ccc #ccc #555;"></div>
<svg style="left:523.4px;top:101.2px" width="6" height="6" viewBox="0 0 6 6"><path d="M0.6 2.6l1.6 1.8 3-3.8" fill="none" stroke="#000" stroke-width="1.2"/></svg>
<div style="left:541px;top:103px;width:1.2px;height:1.2px;background:#1d4f9e;"></div>
<div class="t" style="left:552.5px;top:96px;font-size:8.4px;transform:scaleX(0.8850);transform-origin:0 50%;color:#000;">BSA_0P5__2_LDAO.vaf</div>
<div class="t" style="left:288px;top:121px;font-size:10.4px;transform:scaleX(0.8519);transform-origin:0 50%;color:#383838;">8.0x10</div>
<div class="t" style="left:316px;top:117px;font-size:8px;transform:scaleX(0.8767);transform-origin:0 50%;color:#383838;">4</div>
<div class="t" style="left:288px;top:173px;font-size:10.4px;transform:scaleX(0.8519);transform-origin:0 50%;color:#383838;">6.0x10</div>
<div class="t" style="left:316px;top:170px;font-size:8px;transform:scaleX(0.8767);transform-origin:0 50%;color:#383838;">4</div>
<div class="t" style="left:288px;top:226px;font-size:10.4px;transform:scaleX(0.8519);transform-origin:0 50%;color:#383838;">4.0x10</div>
<div class="t" style="left:316px;top:222px;font-size:8px;transform:scaleX(0.8767);transform-origin:0 50%;color:#383838;">4</div>
<div class="t" style="left:288px;top:278px;font-size:10.4px;transform:scaleX(0.8519);transform-origin:0 50%;color:#383838;">2.0x10</div>
<div class="t" style="left:316px;top:275px;font-size:8px;transform:scaleX(0.8767);transform-origin:0 50%;color:#383838;">4</div>
<div class="t" style="left:307.4px;top:331px;font-size:10.4px;transform:scaleX(0.9270);transform-origin:0 50%;color:#383838;">0.0</div>
<div class="t" style="left:370.0px;top:343px;font-size:10.4px;transform:scaleX(0.8696);transform-origin:0 50%;color:#383838;">10.0</div>
<div class="t" style="left:470.0px;top:343px;font-size:10.4px;transform:scaleX(0.9041);transform-origin:0 50%;color:#383838;">11.0</div>
<div class="t" style="left:570.0px;top:343px;font-size:10.4px;transform:scaleX(0.8696);transform-origin:0 50%;color:#383838;">12.0</div>
<div class="t" style="left:670.0px;top:343px;font-size:10.4px;transform:scaleX(0.8696);transform-origin:0 50%;color:#383838;">13.0</div>
<div class="t" style="left:770.0px;top:343px;font-size:10.4px;transform:scaleX(0.8696);transform-origin:0 50%;color:#383838;">14.0</div>
<div class="t" style="left:569px;top:355px;font-size:9.4px;transform:scaleX(0.9902);transform-origin:0 50%;font-weight:700;color:#1a1a1a;">time or volume</div>
<div class="t" style="left:235.41px;top:223.5px;width:86.18px;font-size:9.4px;font-weight:700;color:#1a1a1a;transform:rotate(-90deg) scaleX(1.0141);transform-origin:50% 50%;">molar mass (g/mol)</div>
<div style="left:263px;top:377px;width:622px;height:310.6px;background:#7b7f82;border:2px solid;border-color:#4e5052 #e8e6e2 #e8e6e2 #4e5052;"></div>
<div style="left:266px;top:379px;width:420px;height:18px;background:#cfccc4;border-bottom:1px solid #85837f;border-right:1px solid #85837f;border-top:1px solid #fff;"></div>
<div style="left:357px;top:380px;width:1px;height:17px;background:#85837f;"></div>
<div style="left:358px;top:380px;width:1px;height:16px;background:#fff;"></div>
<div class="t" style="left:508.8px;top:380px;font-size:9.9px;transform:scaleX(0.9820);transform-origin:0 50%;font-weight:700;color:#101010;-webkit-text-stroke:0.2px #101010;">Value</div>
<div style="left:266px;top:397.0px;width:11px;height:17.600000000000023px;background:#cfccc4;"></div>
<div style="left:277px;top:397.0px;width:81px;height:17.600000000000023px;background:#cfccc4;border:1px solid;border-color:#fff #85837f #85837f #fff;"></div>
<div class="t" style="left:280.3px;top:398px;font-size:9.9px;transform:scaleX(0.8946);transform-origin:0 50%;font-weight:700;color:#101010;-webkit-text-stroke:0.2px #101010;">Display</div>
<div style="left:358px;top:397.0px;width:328px;height:17.600000000000023px;background:#fff;border-bottom:1px solid #c3cbd0;border-right:1px solid #85837f;"></div>
<div class="t" style="left:361.5px;top:398px;font-size:9px;transform:scaleX(0.9676);transform-origin:0 50%;color:#1c1c1c;">molar mass</div>
<div style="left:672.5px;top:397.5px;width:12.5px;height:13px;background:#cfccc4;border:1px solid;border-color:#fff #404040 #404040 #fff;box-shadow:inset -1px -1px 0 #85837f;"></div>
<svg style="left:676px;top:402.5px" width="5.5" height="3.2" viewBox="0 0 5.5 3.2"><path d="M0 0h5.5l-2.75 3.2z" fill="#000"/></svg>
<div style="left:266px;top:414.6px;width:11px;height:17.599999999999966px;background:#cfccc4;"></div>
<div style="left:277px;top:414.6px;width:81px;height:17.599999999999966px;background:#cfccc4;border:1px solid;border-color:#fff #85837f #85837f #fff;"></div>
<div class="t" style="left:280.3px;top:416px;font-size:9.9px;transform:scaleX(0.9050);transform-origin:0 50%;font-weight:700;color:#101010;-webkit-text-stroke:0.2px #101010;">Distribution Type</div>
<div style="left:358px;top:414.6px;width:328px;height:17.599999999999966px;background:#fff;border-bottom:1px solid #c3cbd0;border-right:1px solid #85837f;"></div>
<div class="t" style="left:360.6px;top:415px;font-size:9px;transform:scaleX(0.9998);transform-origin:0 50%;color:#1c1c1c;">vs. time or volume</div>
<div style="left:672.5px;top:415.1px;width:12.5px;height:13px;background:#cfccc4;border:1px solid;border-color:#fff #404040 #404040 #fff;box-shadow:inset -1px -1px 0 #85837f;"></div>
<svg style="left:676px;top:420.1px" width="5.5" height="3.2" viewBox="0 0 5.5 3.2"><path d="M0 0h5.5l-2.75 3.2z" fill="#000"/></svg>
<div style="left:266px;top:432.2px;width:11px;height:17.600000000000023px;background:#cfccc4;"></div>
<div style="left:277px;top:432.2px;width:81px;height:17.600000000000023px;background:#cfccc4;border:1px solid;border-color:#fff #85837f #85837f #fff;"></div>
<div class="t" style="left:280.3px;top:434px;font-size:9.9px;transform:scaleX(0.9153);transform-origin:0 50%;font-weight:700;color:#101010;-webkit-text-stroke:0.2px #101010;">Chromatogram 1</div>
<div style="left:358px;top:432.2px;width:328px;height:17.600000000000023px;background:#fff;border-bottom:1px solid #c3cbd0;border-right:1px solid #85837f;"></div>
<div class="t" style="left:360.8px;top:433px;font-size:9px;transform:scaleX(0.9964);transform-origin:0 50%;color:#1c1c1c;">differential refractive index</div>
<div style="left:672.5px;top:432.7px;width:12.5px;height:13px;background:#cfccc4;border:1px solid;border-color:#fff #404040 #404040 #fff;box-shadow:inset -1px -1px 0 #85837f;"></div>
<svg style="left:676px;top:437.7px" width="5.5" height="3.2" viewBox="0 0 5.5 3.2"><path d="M0 0h5.5l-2.75 3.2z" fill="#000"/></svg>
<div style="left:266px;top:449.8px;width:11px;height:17.599999999999966px;background:#cfccc4;"></div>
<div style="left:277px;top:449.8px;width:81px;height:17.599999999999966px;background:#cfccc4;border:1px solid;border-color:#fff #85837f #85837f #fff;"></div>
<div class="t" style="left:280.3px;top:451px;font-size:9.9px;transform:scaleX(0.9153);transform-origin:0 50%;font-weight:700;color:#101010;-webkit-text-stroke:0.2px #101010;">Chromatogram 2</div>
<div style="left:358px;top:449.8px;width:328px;height:17.599999999999966px;background:#fff;border-bottom:1px solid #c3cbd0;border-right:1px solid #85837f;"></div>
<div class="t" style="left:360.8px;top:451px;font-size:9px;transform:scaleX(0.9511);transform-origin:0 50%;color:#1c1c1c;">UV absorbance</div>
<div style="left:672.5px;top:450.3px;width:12.5px;height:13px;background:#cfccc4;border:1px solid;border-color:#fff #404040 #404040 #fff;box-shadow:inset -1px -1px 0 #85837f;"></div>
<svg style="left:676px;top:455.3px" width="5.5" height="3.2" viewBox="0 0 5.5 3.2"><path d="M0 0h5.5l-2.75 3.2z" fill="#000"/></svg>
<div style="left:266px;top:467.4px;width:11px;height:17.600000000000023px;background:#cfccc4;"></div>
<div style="left:277px;top:467.4px;width:81px;height:17.600000000000023px;background:#cfccc4;border:1px solid;border-color:#fff #85837f #85837f #fff;"></div>
<div class="t" style="left:280.3px;top:469px;font-size:9.9px;transform:scaleX(0.9196);transform-origin:0 50%;font-weight:700;color:#101010;-webkit-text-stroke:0.2px #101010;">Log Scale</div>
<div style="left:358px;top:467.4px;width:328px;height:17.600000000000023px;background:#fff;border-bottom:1px solid #c3cbd0;border-right:1px solid #85837f;"></div>
<div style="left:360.2px;top:470.29999999999995px;width:11.6px;height:11.8px;background:#fff;border:1px solid;border-color:#747474 #d4d4d4 #d4d4d4 #747474;box-shadow:inset 1px 1px 0 #9c9c9c;"></div>
<div style="left:266px;top:485.0px;width:11px;height:17.600000000000023px;background:#cfccc4;"></div>
<div style="left:277px;top:485.0px;width:81px;height:17.600000000000023px;background:#cfccc4;border:1px solid;border-color:#fff #85837f #85837f #fff;"></div>
<div class="t" style="left:280.3px;top:486px;font-size:9.9px;transform:scaleX(0.9274);transform-origin:0 50%;font-weight:700;color:#101010;-webkit-text-stroke:0.2px #101010;">Experiment</div>
<div style="left:358px;top:485.0px;width:328px;height:17.600000000000023px;background:#f8f2dc;border-bottom:1px solid #c3cbd0;border-right:1px solid #85837f;"></div>
<div style="left:267.5px;top:490.0px;width:7px;height:7px;border:1px solid #8a8a8a;background:#cfccc4;"></div>
<div style="left:269.5px;top:493.0px;width:3px;height:1px;background:#222;"></div>
<div style="left:266px;top:502.6px;width:11px;height:17.600000000000023px;background:#cfccc4;"></div>
<div style="left:277px;top:502.6px;width:81px;height:17.600000000000023px;background:#cfccc4;border:1px solid;border-color:#fff #85837f #85837f #fff;"></div>
<div class="t" style="left:288.6px;top:504px;font-size:9.9px;transform:scaleX(0.9239);transform-origin:0 50%;font-weight:700;color:#101010;-webkit-text-stroke:0.2px #101010;">Selection to ...</div>
<div style="left:358px;top:502.6px;width:328px;height:17.600000000000023px;background:#fff;border-bottom:1px solid #c3cbd0;border-right:1px solid #85837f;"></div>
<div class="t" style="left:360.5px;top:503px;font-size:9px;transform:scaleX(0.9229);transform-origin:0 50%;color:#1c1c1c;">BSA_0P5__2_LDAO.vaf</div>
<div style="left:672.5px;top:503.1px;width:12.5px;height:13px;background:#cfccc4;border:1px solid;border-color:#fff #404040 #404040 #fff;box-shadow:inset -1px -1px 0 #85837f;"></div>
<svg style="left:676px;top:508.1px" width="5.5" height="3.2" viewBox="0 0 5.5 3.2"><path d="M0 0h5.5l-2.75 3.2z" fill="#000"/></svg>
<div style="left:266px;top:520.2px;width:11px;height:17.59999999999991px;background:#cfccc4;"></div>
<div style="left:277px;top:520.2px;width:81px;height:17.59999999999991px;background:#cfccc4;border:1px solid;border-color:#fff #85837f #85837f #fff;"></div>
<div class="t" style="left:288.6px;top:522px;font-size:9.9px;transform:scaleX(0.9235);transform-origin:0 50%;font-weight:700;color:#101010;-webkit-text-stroke:0.2px #101010;">Show Chrom...</div>
<div style="left:358px;top:520.2px;width:328px;height:17.59999999999991px;background:#fff;border-bottom:1px solid #c3cbd0;border-right:1px solid #85837f;"></div>
<div style="left:360.2px;top:523.1px;width:11.6px;height:11.8px;background:#fff;border:1px solid;border-color:#747474 #d4d4d4 #d4d4d4 #747474;box-shadow:inset 1px 1px 0 #9c9c9c;"></div>
<svg style="left:362.8px;top:525.9px" width="7" height="7" viewBox="0 0 7 7"><path d="M0.6 3l1.9 2 3.6-4.2" fill="none" stroke="#000" stroke-width="1.4"/></svg>
<div style="left:266px;top:537.8px;width:11px;height:17.600000000000023px;background:#cfccc4;"></div>
<div style="left:277px;top:537.8px;width:81px;height:17.600000000000023px;background:#cfccc4;border:1px solid;border-color:#fff #85837f #85837f #fff;"></div>
<div class="t" style="left:288.6px;top:539px;font-size:9.9px;transform:scaleX(0.9235);transform-origin:0 50%;font-weight:700;color:#101010;-webkit-text-stroke:0.2px #101010;">Show Chrom...</div>
<div style="left:358px;top:537.8px;width:328px;height:17.600000000000023px;background:#13356b;border-bottom:1px solid #c3cbd0;border-right:1px solid #85837f;"></div>
<div style="left:360.2px;top:540.6999999999999px;width:11.6px;height:11.8px;background:#fff;border:1px solid;border-color:#747474 #d4d4d4 #d4d4d4 #747474;box-shadow:inset 1px 1px 0 #9c9c9c;"></div>
<svg style="left:362.8px;top:543.4999999999999px" width="7" height="7" viewBox="0 0 7 7"><path d="M0.6 3l1.9 2 3.6-4.2" fill="none" stroke="#000" stroke-width="1.4"/></svg>
<div style="left:266px;top:555.4px;width:11px;height:17.600000000000023px;background:#cfccc4;"></div>
<div style="left:277px;top:555.4px;width:81px;height:17.600000000000023px;background:#cfccc4;border:1px solid;border-color:#fff #85837f #85837f #fff;"></div>
<div class="t" style="left:288.6px;top:557px;font-size:9.9px;transform:scaleX(0.9290);transform-origin:0 50%;font-weight:700;color:#101010;-webkit-text-stroke:0.2px #101010;">Marker Type</div>
<div style="left:358px;top:555.4px;width:328px;height:17.600000000000023px;background:#fff;border-bottom:1px solid #c3cbd0;border-right:1px solid #85837f;"></div>
<div class="t" style="left:360.8px;top:556px;font-size:9px;transform:scaleX(0.9812);transform-origin:0 50%;color:#1c1c1c;">square</div>
<div style="left:672.5px;top:555.9px;width:12.5px;height:13px;background:#cfccc4;border:1px solid;border-color:#fff #404040 #404040 #fff;box-shadow:inset -1px -1px 0 #85837f;"></div>
<svg style="left:676px;top:560.9px" width="5.5" height="3.2" viewBox="0 0 5.5 3.2"><path d="M0 0h5.5l-2.75 3.2z" fill="#000"/></svg>
<div style="left:266px;top:573.0px;width:11px;height:17.600000000000023px;background:#cfccc4;"></div>
<div style="left:277px;top:573.0px;width:81px;height:17.600000000000023px;background:#cfccc4;border:1px solid;border-color:#fff #85837f #85837f #fff;"></div>
<div class="t" style="left:288.6px;top:574px;font-size:9.9px;transform:scaleX(0.9170);transform-origin:0 50%;font-weight:700;color:#101010;-webkit-text-stroke:0.2px #101010;">Marker Color</div>
<div style="left:358px;top:573.0px;width:328px;height:17.600000000000023px;background:#fff;border-bottom:1px solid #c3cbd0;border-right:1px solid #85837f;"></div>
<div class="t" style="left:360.8px;top:574px;font-size:9px;transform:scaleX(0.9698);transform-origin:0 50%;color:#1c1c1c;">blue</div>
<div style="left:672.5px;top:573.5px;width:12.5px;height:13px;background:#cfccc4;border:1px solid;border-color:#fff #404040 #404040 #fff;box-shadow:inset -1px -1px 0 #85837f;"></div>
<svg style="left:676px;top:578.5px" width="5.5" height="3.2" viewBox="0 0 5.5 3.2"><path d="M0 0h5.5l-2.75 3.2z" fill="#000"/></svg>
<div style="left:266px;top:590.6px;width:11px;height:17.600000000000023px;background:#cfccc4;"></div>
<div style="left:277px;top:590.6px;width:81px;height:17.600000000000023px;background:#cfccc4;border:1px solid;border-color:#fff #85837f #85837f #fff;"></div>
<div class="t" style="left:288.6px;top:592px;font-size:9.9px;transform:scaleX(0.9359);transform-origin:0 50%;font-weight:700;color:#101010;-webkit-text-stroke:0.2px #101010;">Marker Size</div>
<div style="left:358px;top:590.6px;width:328px;height:17.600000000000023px;background:#fff;border-bottom:1px solid #c3cbd0;border-right:1px solid #85837f;"></div>
<div class="t" style="left:360.8px;top:591px;font-size:9px;transform:scaleX(0.9685);transform-origin:0 50%;color:#1c1c1c;">medium</div>
<div style="left:672.5px;top:591.1px;width:12.5px;height:13px;background:#cfccc4;border:1px solid;border-color:#fff #404040 #404040 #fff;box-shadow:inset -1px -1px 0 #85837f;"></div>
<svg style="left:676px;top:596.1px" width="5.5" height="3.2" viewBox="0 0 5.5 3.2"><path d="M0 0h5.5l-2.75 3.2z" fill="#000"/></svg>
<div style="left:266px;top:608.2px;width:11px;height:17.59999999999991px;background:#cfccc4;"></div>
<div style="left:277px;top:608.2px;width:81px;height:17.59999999999991px;background:#cfccc4;border:1px solid;border-color:#fff #85837f #85837f #fff;"></div>
<div class="t" style="left:288.6px;top:610px;font-size:9.9px;transform:scaleX(0.9235);transform-origin:0 50%;font-weight:700;color:#101010;-webkit-text-stroke:0.2px #101010;">Draw Mark E...</div>
<div style="left:358px;top:608.2px;width:328px;height:17.59999999999991px;background:#fff;border-bottom:1px solid #c3cbd0;border-right:1px solid #85837f;"></div>
<div class="t" style="left:360.8px;top:609px;font-size:9px;transform:scaleX(0.7992);transform-origin:0 50%;color:#1c1c1c;">1</div>
<div style="left:672.5px;top:608.7px;width:12.5px;height:13px;background:#cfccc4;border:1px solid;border-color:#fff #404040 #404040 #fff;box-shadow:inset -1px -1px 0 #85837f;"></div>
<svg style="left:676px;top:613.7px" width="5.5" height="3.2" viewBox="0 0 5.5 3.2"><path d="M0 0h5.5l-2.75 3.2z" fill="#000"/></svg>
<div style="left:276px;top:397px;width:1px;height:228.8px;background:#85837f;"></div>
<div style="left:266px;top:624.8px;width:11px;height:1px;background:#85837f;"></div>
<div style="left:262px;top:687px;width:1px;height:19px;background:#a09e99;"></div>
<div style="left:263px;top:687px;width:1px;height:19px;background:#f2f1ee;"></div>
<svg style="left:267px;top:691.5px" width="11" height="11" viewBox="0 0 11 11"><rect x="0.5" y="0.8" width="7" height="8.5" fill="#fff" stroke="#444" stroke-width="0.9"/><path d="M2 3.3h4M2 5.1h4M2 6.9h4" stroke="#444" stroke-width="0.8"/><path d="M3.8 5.2l1.9 3.6 4.3-6.6" fill="none" stroke="#2a3cb0" stroke-width="1.2"/></svg>
<div class="t" style="left:281.9px;top:690px;font-size:10px;transform:scaleX(0.7959);transform-origin:0 50%;color:#222;">OK</div>
<div style="left:300px;top:690px;width:1px;height:15px;background:#a09e99;"></div>
<div style="left:301px;top:690px;width:1px;height:15px;background:#f2f1ee;"></div>
<svg style="left:307.3px;top:691.5px" width="11" height="11" viewBox="0 0 11 11"><rect x="0.5" y="0.8" width="7" height="8.5" fill="#fff" stroke="#444" stroke-width="0.9"/><path d="M2 3.3h4M2 5.1h4M2 6.9h4" stroke="#444" stroke-width="0.8"/><path d="M4.6 1l5.2 9M10 1.2l-5.2 8" fill="none" stroke="#c82020" stroke-width="1.2"/></svg>
<div class="t" style="left:322.1px;top:690px;font-size:10px;transform:scaleX(0.8482);transform-origin:0 50%;color:#222;">Cancel</div>
<div style="left:355px;top:690px;width:1px;height:15px;background:#a09e99;"></div>
<div style="left:356px;top:690px;width:1px;height:15px;background:#f2f1ee;"></div>
<svg style="left:362px;top:691.5px" width="11" height="11" viewBox="0 0 11 11"><rect x="0.5" y="0.8" width="7" height="8.5" fill="#dcdad4" stroke="#9a9a9a" stroke-width="0.9"/><path d="M2 3.3h4M2 5.1h4M2 6.9h4" stroke="#9a9a9a" stroke-width="0.8"/><path d="M8.8 1.5v7M7.2 7l1.6 1.8L10.4 7" fill="none" stroke="#9a9a9a" stroke-width="1"/></svg>
<div class="t" style="left:377.2px;top:690px;font-size:10px;transform:scaleX(0.8315);transform-origin:0 50%;color:#8e8c88;">Apply</div>
<div style="left:404px;top:690px;width:1px;height:15px;background:#a09e99;"></div>
<div style="left:405px;top:690px;width:1px;height:15px;background:#f2f1ee;"></div>
</div>
</body></html>
